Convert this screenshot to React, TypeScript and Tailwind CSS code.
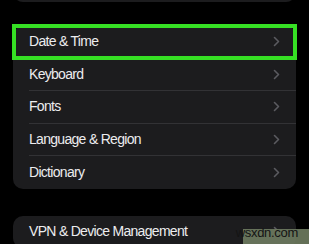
import React from 'react';

const groupOne = ['Date & Time', 'Keyboard', 'Fonts', 'Language & Region', 'Dictionary'];

function Chevron() {
  return (
    <svg width="7" height="11" viewBox="0 0 7 11" fill="none" className="shrink-0">
      <path d="M1.5 1.5L5.5 5.5L1.5 9.5" stroke="#5b5b60" strokeWidth="1.6" strokeLinecap="round" strokeLinejoin="round" />
    </svg>
  );
}

function Row({ label, last, highlight }: { label: string; last?: boolean; highlight?: boolean }) {
  return (
    <div className="relative h-[32.5px] pl-[16px]">
      <div className={`flex h-full items-center pr-[16px] ${last ? '' : 'border-b border-[#323235]'}`}>
        <span className="flex-1 text-[14px] tracking-[-0.7px] text-[#ececee]">{label}</span>
        <Chevron />
      </div>
      {highlight && (
        <div className="absolute -top-[2px] -bottom-[1px] -left-[1px] -right-[1px] border-[4px] border-[#36e024]" />
      )}
    </div>
  );
}

export default function App() {
  return (
    <div
      className="relative h-[244px] w-[309px] overflow-hidden bg-black"
      style={{ fontFamily: '"Liberation Sans", Arial, sans-serif' }}
    >
      <div className="mx-[13px] -mt-[10px] h-[12px] rounded-b-[10px] bg-[#1c1c1e]" />

      <div className="mx-[13px] mt-[24px] rounded-[10px] bg-[#1c1c1e]">
        {groupOne.map((label, i) => (
          <Row key={label} label={label} highlight={i === 0} last={i === groupOne.length - 1} />
        ))}
      </div>

      <div className="mx-[13px] mt-[27px] rounded-[10px] bg-[#1c1c1e]">
        <Row label="VPN & Device Management" last />
      </div>

      <div className="absolute bottom-0 right-0 h-[15px] w-[66px] bg-[#6f7c61] opacity-90" />
      <div className="absolute bottom-[5px] right-[11px] text-[13px] leading-none tracking-[-0.3px] text-[#141414]">
        wsxdn.com
      </div>
    </div>
  );
}
